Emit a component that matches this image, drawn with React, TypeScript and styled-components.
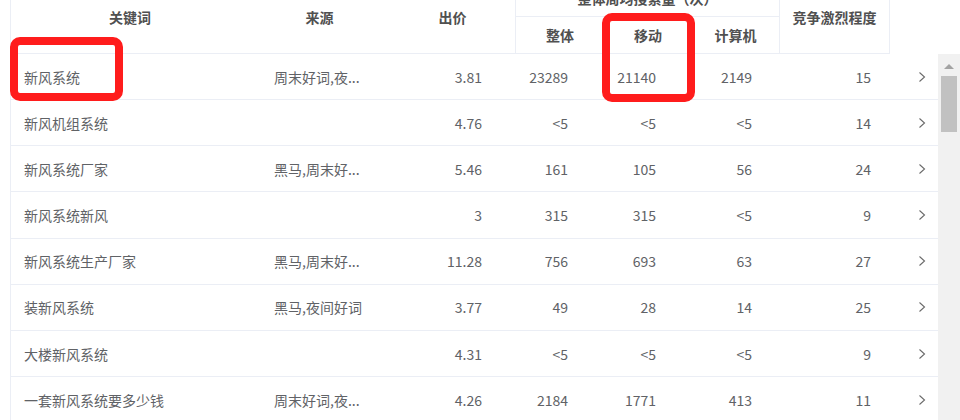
import React from "react";
import styled, { createGlobalStyle } from "styled-components";

const GlobalStyle = createGlobalStyle`
  html, body { margin: 0; padding: 0; background: #fff; }
  body {
    font-family: "Microsoft YaHei", "Noto Sans CJK SC", "Noto Sans", sans-serif;
    font-size: 14px;
    color: #606266;
  }
  * { box-sizing: border-box; }
`;

const COLS = "238px 141px 126px 88px 88px 88px 110px 48px";
const LINE = "#ebeef5";

const Page = styled.div`
  position: relative;
  width: 960px;
  height: 420px;
  overflow: hidden;
  padding-left: 10px;
`;

const Table = styled.div`
  border-left: 1px solid ${LINE};
  width: 950px;
`;

const Header = styled.div`
  display: grid;
  grid-template-columns: ${COLS};
  grid-template-rows: 37px 37px;
  margin-top: -20px;
  width: 927px;
`;

const HeadCell = styled.div<{
  $col: string;
  $row: string;
  $right?: boolean;
  $bottom?: boolean;
}>`
  grid-column: ${(p) => p.$col};
  grid-row: ${(p) => p.$row};
  display: flex;
  align-items: center;
  justify-content: center;
  font-weight: bold;
  color: #505050;
  white-space: nowrap;
  border-right: ${(p) => (p.$right ? `1px solid ${LINE}` : "none")};
  border-bottom: ${(p) => (p.$bottom ? `1px solid ${LINE}` : "none")};
`;

const BodyArea = styled.div`
  display: flex;
  align-items: stretch;
`;

const Body = styled.div`
  width: 927px;
  display: flex;
  flex-direction: column;
`;

const Row = styled.div`
  display: grid;
  grid-template-columns: ${COLS};
  height: 46.17px;
  flex: none;
  border-bottom: 1px solid ${LINE};
`;

const Cell = styled.div<{ $align?: "left" | "right"; $pl?: number; $pr?: number }>`
  display: flex;
  align-items: center;
  justify-content: ${(p) => (p.$align === "right" ? "flex-end" : "flex-start")};
  padding-left: ${(p) => p.$pl ?? 0}px;
  padding-right: ${(p) => p.$pr ?? 0}px;
  white-space: nowrap;
  overflow: hidden;
  color: #606266;
`;

const ArrowCell = styled.div`
  display: flex;
  align-items: center;
  padding-left: 28px;
`;

const Track = styled.div`
  width: 23px;
  background: #f1f1f1;
  display: flex;
  flex-direction: column;
  align-items: center;
  padding-top: 10px;
  min-height: 400px;
`;

const UpArrow = styled.div`
  width: 0;
  height: 0;
  border-left: 5px solid transparent;
  border-right: 5px solid transparent;
  border-bottom: 5px solid #a3a3a3;
`;

const Thumb = styled.div`
  margin-top: 7px;
  width: 16px;
  height: 56px;
  background: #c1c1c1;
`;

const Mark = styled.div<{ $x: number; $y: number; $w: number; $h: number }>`
  position: absolute;
  left: ${(p) => p.$x}px;
  top: ${(p) => p.$y}px;
  width: ${(p) => p.$w}px;
  height: ${(p) => p.$h}px;
  border: 8px solid #ff1c1c;
  border-radius: 10px;
  pointer-events: none;
`;

type Item = {
  kw: string;
  src: string;
  bid: string;
  all: string;
  mobile: string;
  pc: string;
  comp: string;
};

const rows: Item[] = [
  { kw: "新风系统", src: "周末好词,夜间好词", bid: "3.81", all: "23289", mobile: "21140", pc: "2149", comp: "15" },
  { kw: "新风机组系统", src: "", bid: "4.76", all: "<5", mobile: "<5", pc: "<5", comp: "14" },
  { kw: "新风系统厂家", src: "黑马,周末好词,夜间好词", bid: "5.46", all: "161", mobile: "105", pc: "56", comp: "24" },
  { kw: "新风系统新风", src: "", bid: "3", all: "315", mobile: "315", pc: "<5", comp: "9" },
  { kw: "新风系统生产厂家", src: "黑马,周末好词,夜间好词", bid: "11.28", all: "756", mobile: "693", pc: "63", comp: "27" },
  { kw: "装新风系统", src: "黑马,夜间好词", bid: "3.77", all: "49", mobile: "28", pc: "14", comp: "25" },
  { kw: "大楼新风系统", src: "", bid: "4.31", all: "<5", mobile: "<5", pc: "<5", comp: "9" },
  { kw: "一套新风系统要多少钱", src: "周末好词,夜间好词", bid: "4.26", all: "2184", mobile: "1771", pc: "413", comp: "11" },
];

const clip = (s: string) => (s.length > 7 ? s.slice(0, 6) + "..." : s);

const Chevron = () => (
  <svg width="8" height="12" viewBox="0 0 8 12" fill="none">
    <path d="M1.5 1.5l5 4.5-5 4.5" stroke="#6a6a6a" strokeWidth="1.1" />
  </svg>
);

export default function App() {
  return (
    <Page>
      <GlobalStyle />
      <Table>
        <Header>
          <HeadCell $col="1" $row="1 / 3" $bottom>关键词</HeadCell>
          <HeadCell $col="2" $row="1 / 3" $bottom>来源</HeadCell>
          <HeadCell $col="3" $row="1 / 3" $bottom $right>出价</HeadCell>
          <HeadCell $col="4 / 7" $row="1" $bottom $right>整体周均搜索量（次）</HeadCell>
          <HeadCell $col="4" $row="2" $bottom>整体</HeadCell>
          <HeadCell $col="5" $row="2" $bottom>移动</HeadCell>
          <HeadCell $col="6" $row="2" $bottom $right>计算机</HeadCell>
          <HeadCell $col="7" $row="1 / 3" $bottom $right>竞争激烈程度</HeadCell>
          <HeadCell $col="8" $row="1 / 3" />
        </Header>
        <BodyArea>
          <Body>
            {rows.map((r) => (
              <Row key={r.kw}>
                <Cell $pl={13}>{r.kw}</Cell>
                <Cell $pl={25}>{clip(r.src)}</Cell>
                <Cell $align="right" $pr={34}>{r.bid}</Cell>
                <Cell $align="right" $pr={36}>{r.all}</Cell>
                <Cell $align="right" $pr={36}>{r.mobile}</Cell>
                <Cell $align="right" $pr={28}>{r.pc}</Cell>
                <Cell $align="right" $pr={19}>{r.comp}</Cell>
                <ArrowCell>
                  <Chevron />
                </ArrowCell>
              </Row>
            ))}
          </Body>
          <Track>
            <UpArrow />
            <Thumb />
          </Track>
        </BodyArea>
      </Table>
      <Mark $x={10} $y={37} $w={113} $h={64} />
      <Mark $x={602} $y={13} $w={93} $h={89} />
    </Page>
  );
}
